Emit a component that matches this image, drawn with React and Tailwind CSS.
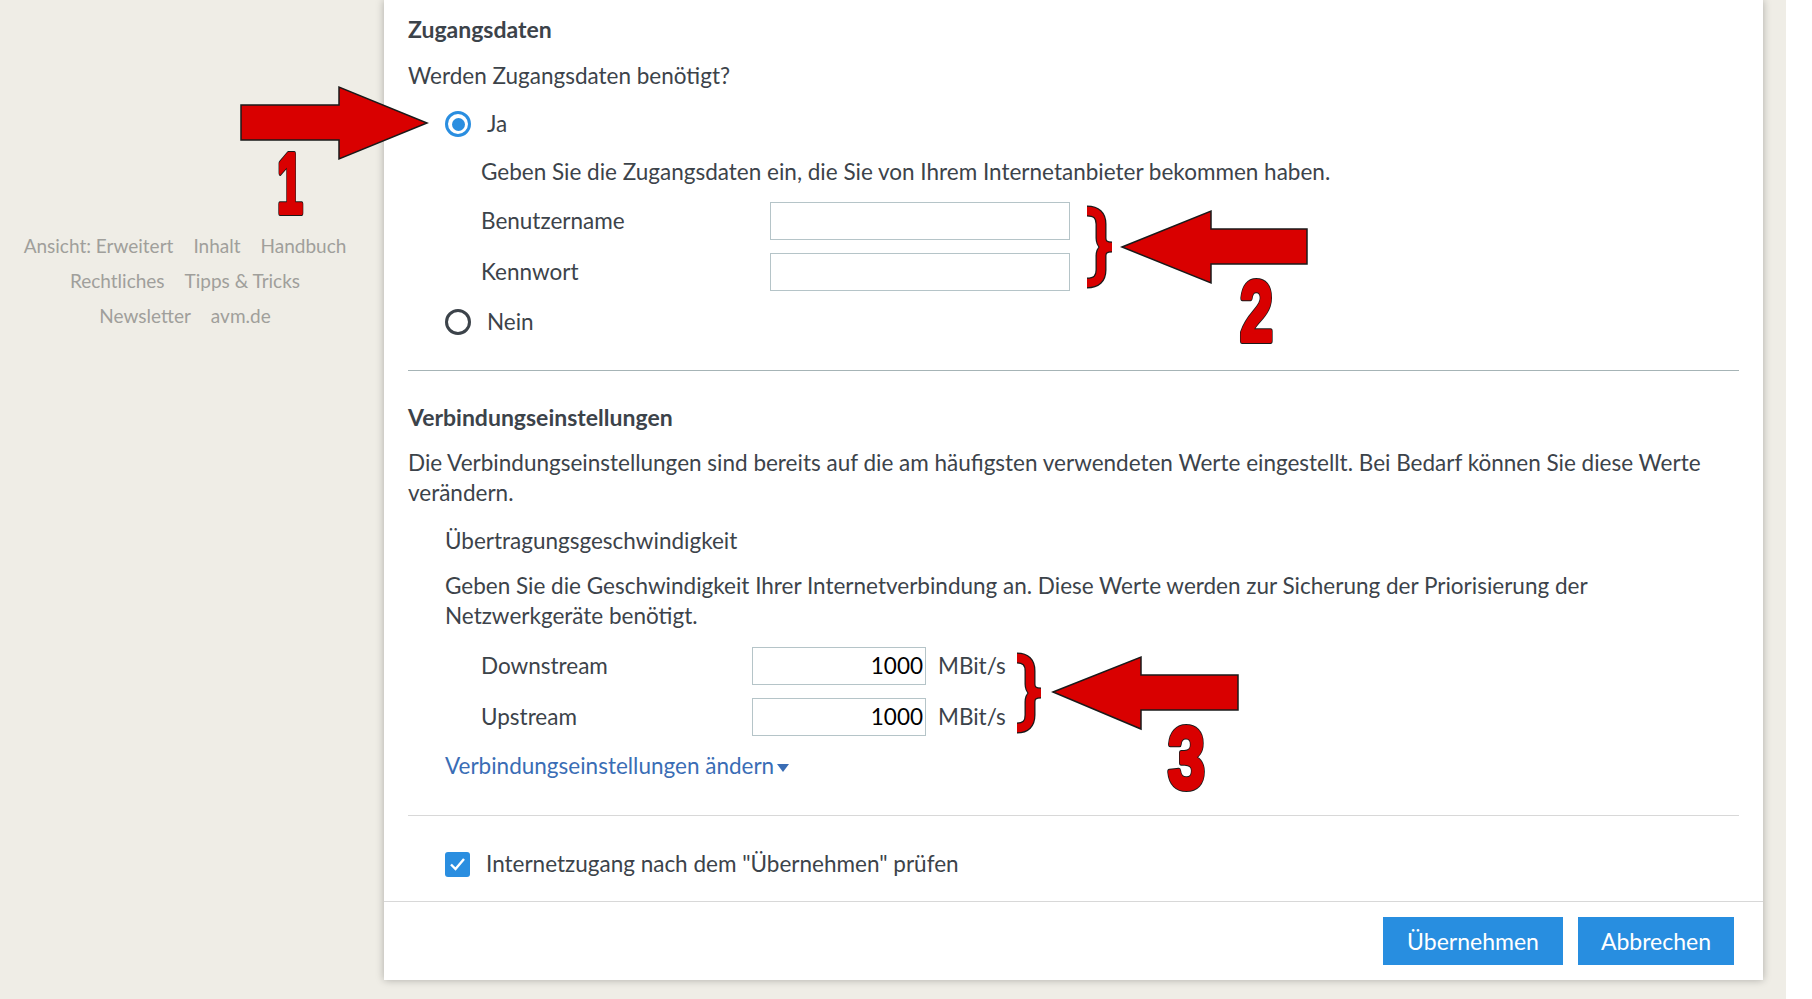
import React from 'react';

const font = "font-['Lato','Noto_Sans',sans-serif]";

function Radio({ checked }) {
  return (
    <span className={`w-[26px] h-[26px] rounded-full flex items-center justify-center shrink-0 border-[3px] ${checked ? 'border-[#2a8ee0]' : 'border-[#3c434a]'}`}>
      {checked && <span className="w-[13px] h-[13px] rounded-full bg-[#2a8ee0]"></span>}
    </span>
  );
}

// heavy red numeral with a dark outline
function Num({ x, y, w, size, children }) {
  const common = {
    x, y, fontSize: size, textLength: w, lengthAdjust: 'spacingAndGlyphs',
    fontFamily: 'Liberation Sans, Arial, sans-serif', fontWeight: 'bold', strokeLinejoin: 'round',
  };
  return (
    <g>
      <text {...common} fill="#1a1a1a" stroke="#1a1a1a" strokeWidth="6">{children}</text>
      <text {...common} fill="#d90000" stroke="#d90000" strokeWidth="4">{children}</text>
    </g>
  );
}

function Brace({ d }) {
  return (
    <g>
      <path d={d} fill="none" stroke="#1a1a1a" strokeWidth="11" />
      <path d={d} fill="none" stroke="#d90000" strokeWidth="8.5" />
    </g>
  );
}

function Annotations() {
  return (
    <svg className="absolute left-0 top-0 z-20 pointer-events-none" width="1812" height="999" viewBox="0 0 1812 999">
      {/* 1 */}
      <polygon points="241,105 339,105 339,87 427,123 339,159 339,140 241,140" fill="#d90000" stroke="#1a1a1a" strokeWidth="1.5" />
      <Num x={277} y={213} w={26} size={86}>1</Num>

      {/* 2 */}
      <Brace d="M1087 211 Q1101 211 1101 224 L1101 238 Q1101 247 1112 247 Q1101 247 1101 256 L1101 270 Q1101 283 1087 283" />
      <polygon points="1122,247 1211,211 1211,229 1307,229 1307,264 1211,264 1211,283" fill="#d90000" stroke="#1a1a1a" strokeWidth="1.5" />
      <Num x={1240} y={341} w={33} size={86}>2</Num>

      {/* 3 */}
      <Brace d="M1017 658 Q1030 658 1030 671 L1030 684 Q1030 693 1041 693 Q1030 693 1030 702 L1030 715 Q1030 728 1017 728" />
      <polygon points="1053,692 1141,657 1141,675 1238,675 1238,710 1141,710 1141,729" fill="#d90000" stroke="#1a1a1a" strokeWidth="1.5" />
      <Num x={1168} y={788} w={37} size={87}>3</Num>
    </svg>
  );
}

export default function App() {
  return (
    <div className={`relative w-[1812px] h-[999px] overflow-hidden flex bg-[#efede6] text-[#3c434a] ${font}`}>
      {/* left column */}
      <div className="w-[384px] shrink-0">
        <div className="w-[370px] pt-[228px] text-[19px] leading-[35px] text-[#a09f9b]">
          <div className="flex justify-center gap-[20px]"><span>Ansicht: Erweitert</span><span>Inhalt</span><span>Handbuch</span></div>
          <div className="flex justify-center gap-[20px]"><span>Rechtliches</span><span>Tipps &amp; Tricks</span></div>
          <div className="flex justify-center gap-[20px]"><span>Newsletter</span><span>avm.de</span></div>
        </div>
      </div>

      {/* main panel */}
      <div className="w-[1379px] h-[980px] shrink-0 bg-white flex flex-col shadow-[0_0_8px_rgba(0,0,0,0.28)] z-10">
        <div className="flex-1 px-[24px] pt-[14px] text-[22.5px] leading-[30px]">
          <div className="font-bold text-[23px]">Zugangsdaten</div>
          <div className="mt-[17px]">Werden Zugangsdaten benötigt?</div>
          <div className="mt-[18px] pl-[37px] flex items-center gap-[16px] h-[30px]"><Radio checked /><span>Ja</span></div>
          <div className="mt-[18px] pl-[73px]">Geben Sie die Zugangsdaten ein, die Sie von Ihrem Internetanbieter bekommen haben.</div>
          <div className="mt-[15px] pl-[73px] flex items-center h-[38px]">
            <span className="w-[289px]">Benutzername</span>
            <div className="w-[300px] h-[38px] border border-[#b5c4c8]"></div>
          </div>
          <div className="mt-[13px] pl-[73px] flex items-center h-[38px]">
            <span className="w-[289px]">Kennwort</span>
            <div className="w-[300px] h-[38px] border border-[#b5c4c8]"></div>
          </div>
          <div className="mt-[16px] pl-[37px] flex items-center gap-[16px] h-[30px]"><Radio /><span>Nein</span></div>

          <div className="mt-[33px] border-t border-[#a6b4b6]"></div>

          <div className="mt-[31px] font-bold text-[23px]">Verbindungseinstellungen</div>
          <div className="mt-[16px]">Die Verbindungseinstellungen sind bereits auf die am häufigsten verwendeten Werte eingestellt. Bei Bedarf können Sie diese Werte verändern.</div>
          <div className="mt-[18px] pl-[37px]">Übertragungsgeschwindigkeit</div>
          <div className="mt-[15px] pl-[37px]">Geben Sie die Geschwindigkeit Ihrer Internetverbindung an. Diese Werte werden zur Sicherung der Priorisierung der Netzwerkgeräte benötigt.</div>
          <div className="mt-[16px] pl-[73px] flex items-center h-[38px]">
            <span className="w-[271px]">Downstream</span>
            <div className="w-[174px] h-[38px] border border-[#b5c4c8] flex items-center justify-end pr-[2px] text-black">1000</div>
            <span className="ml-[12px]">MBit/s</span>
          </div>
          <div className="mt-[13px] pl-[73px] flex items-center h-[38px]">
            <span className="w-[271px]">Upstream</span>
            <div className="w-[174px] h-[38px] border border-[#b5c4c8] flex items-center justify-end pr-[2px] text-black">1000</div>
            <span className="ml-[12px]">MBit/s</span>
          </div>
          <div className="mt-[15px] pl-[37px] text-[#3a6db5] flex items-center">
            <span>Verbindungseinstellungen ändern</span>
            <svg width="12" height="8" viewBox="0 0 12 8" className="ml-[3px] mt-[4px]"><path d="M0 0 L12 0 L6 8 Z" fill="#3a6db5" /></svg>
          </div>

          <div className="mt-[34px] border-t border-[#d8d8d8]"></div>

          <div className="mt-[33px] pl-[37px] flex items-center gap-[16px] h-[30px]">
            <span className="w-[25px] h-[25px] rounded-[3px] bg-[#2a8ee0] flex items-center justify-center">
              <svg width="17" height="14" viewBox="0 0 17 14"><path d="M2 7.5 L6.5 12 L15 2" fill="none" stroke="white" strokeWidth="2.4" /></svg>
            </span>
            <span>Internetzugang nach dem "Übernehmen" prüfen</span>
          </div>
        </div>

        <div className="border-t border-[#d8d8d8] h-[79px] flex items-center justify-end gap-[15px] pr-[29px] text-[23px] text-white">
          <button className="w-[180px] h-[48px] bg-[#288ee0]">Übernehmen</button>
          <button className="w-[156px] h-[48px] bg-[#288ee0]">Abbrechen</button>
        </div>
      </div>

      <div className="w-[23px] shrink-0"></div>
      <div className="flex-1 bg-white"></div>

      <Annotations />
    </div>
  );
}
